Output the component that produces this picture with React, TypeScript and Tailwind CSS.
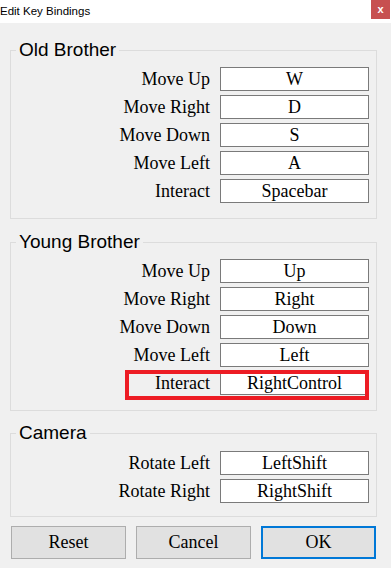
import React from "react";

function Row({ label, value, highlight }: { label: string; value: string; highlight?: boolean }) {
  return (
    <div className="relative flex h-[24px] items-center justify-end">
      <span className="mr-[10px] whitespace-nowrap text-[18px] leading-[24px]">{label}</span>
      <div className="flex h-[24px] w-[149px] items-center justify-center border border-[#7a7a7a] bg-white text-[18px] leading-[22px] whitespace-nowrap">
        {value}
      </div>
      {highlight && (
        <div className="pointer-events-none absolute left-[114px] top-[-1px] h-[30px] w-[244px] border-[4px] border-[#ed1c24]" />
      )}
    </div>
  );
}

function Group({
  title,
  className,
  children,
}: {
  title: string;
  className: string;
  children: React.ReactNode;
}) {
  return (
    <div className={"relative ml-[10px] w-[367px] border border-[#dcdcdc] pr-[7px] " + className}>
      <div className="absolute left-[5px] top-[-11px] bg-[#f0f0f0] px-[3px] font-['Liberation_Sans',Arial,sans-serif] text-[19px] leading-[19px] text-black whitespace-nowrap">
        {title}
      </div>
      <div className="flex flex-col gap-[4px]">{children}</div>
    </div>
  );
}

export default function App() {
  return (
    <div className="h-[568px] w-[391px] overflow-hidden bg-[#f0f0f0] font-['Liberation_Serif',serif] text-black">
      <div className="flex h-[23px] items-start justify-between bg-white">
        <span className="font-['Liberation_Sans',Arial,sans-serif] text-[11.5px] leading-[23px] text-black">
          Edit Key Bindings
        </span>
        <div className="mr-[1px] flex h-[19px] w-[19px] items-center justify-center bg-[#c75050] font-['Liberation_Sans',Arial,sans-serif] text-[11px] font-bold leading-none text-white">
          x
        </div>
      </div>

      <Group title="Old Brother" className="mt-[27px] pt-[16px] pb-[15px]">
        <Row label="Move Up" value="W" />
        <Row label="Move Right" value="D" />
        <Row label="Move Down" value="S" />
        <Row label="Move Left" value="A" />
        <Row label="Interact" value="Spacebar" />
      </Group>

      <Group title="Young Brother" className="mt-[23px] pt-[16px] pb-[15px]">
        <Row label="Move Up" value="Up" />
        <Row label="Move Right" value="Right" />
        <Row label="Move Down" value="Down" />
        <Row label="Move Left" value="Left" />
        <Row label="Interact" value="RightControl" highlight />
      </Group>

      <Group title="Camera" className="mt-[22px] pt-[17px] pb-[13px]">
        <Row label="Rotate Left" value="LeftShift" />
        <Row label="Rotate Right" value="RightShift" />
      </Group>

      <div className="ml-[11px] mt-[9px] flex gap-[10px]">
        <div className="flex h-[33px] w-[115px] items-center justify-center border border-[#adadad] bg-[#e1e1e1] text-[18px]">
          Reset
        </div>
        <div className="flex h-[33px] w-[115px] items-center justify-center border border-[#adadad] bg-[#e1e1e1] text-[18px]">
          Cancel
        </div>
        <div className="flex h-[33px] w-[115px] items-center justify-center border-2 border-[#0078d7] bg-[#e1e1e1] text-[18px]">
          OK
        </div>
      </div>
    </div>
  );
}
